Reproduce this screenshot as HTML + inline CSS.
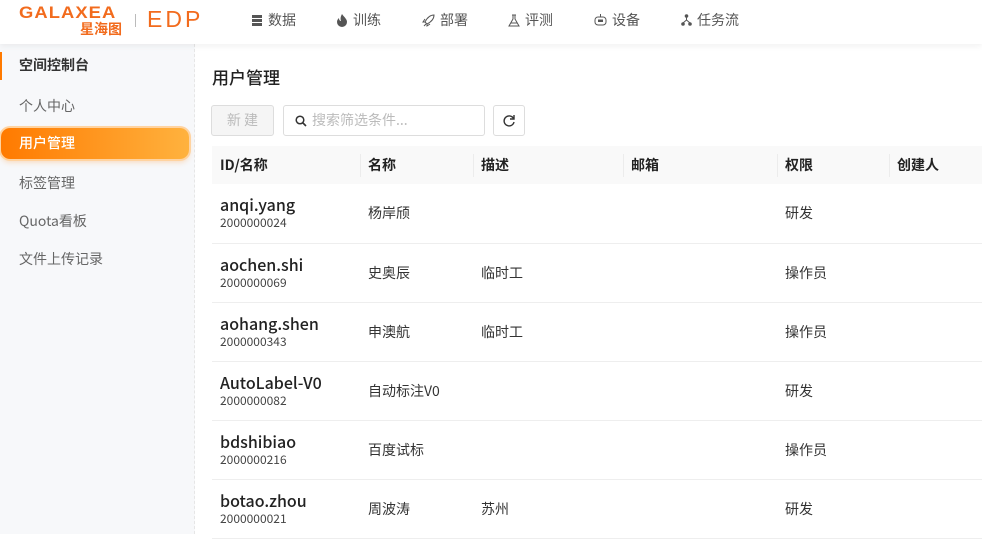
<!DOCTYPE html>
<html><head><meta charset="utf-8"><style>
*{box-sizing:border-box;margin:0;padding:0}
body{width:982px;height:534px;overflow:hidden;background:#fff;font-family:"Noto Sans CJK SC","Liberation Sans",sans-serif;color:#222;position:relative}
.top{position:absolute;left:0;top:0;width:982px;height:44px;background:#fff;box-shadow:0 2px 6px rgba(0,0,0,.06);z-index:2}
.logo{position:absolute;left:19px;top:5px;color:#f26b1d}
.nav{position:absolute;top:10px;font-size:14px;color:#555;display:flex;align-items:center;gap:5px}
.side{position:absolute;left:0;top:44px;width:195px;height:490px;background:#f7f8fa;border-right:1px dashed #e6e6e6}
.si{position:absolute;left:19px;font-size:14px;color:#666}
.act{position:absolute;left:1px;top:84px;width:188px;height:31px;border-radius:9px;background:linear-gradient(90deg,#ff7a00,#ffb23e);box-shadow:0 0 0 2px #ffd3a0,0 3px 6px rgba(255,140,30,.3);color:#fff;font-size:14px;padding:5px 18px;font-weight:500}
.btn{position:absolute;border:1px solid #ddd;border-radius:3px;background:#fff}
table{position:absolute;left:212px;top:146px;border-collapse:collapse;width:770px}
th{height:38px;background:#f9f9f9;text-align:left;font-size:14px;font-weight:700;padding:0 8px;position:relative}
th+th:before{content:"";position:absolute;left:0;top:8px;height:23px;border-left:1px solid #ececec}
td{height:59px;border-bottom:1px solid #eee;font-size:14px;padding:0 8px;color:#333}
.n{font-size:16px;font-weight:500;color:#222;line-height:20px}
.i{font-size:12px;color:#444;line-height:18px}
</style></head><body>
<div class="top">
 <div class="logo">
  <div style="font-size:17px;font-weight:900;line-height:16px;font-family:'Liberation Sans',sans-serif;transform:scaleX(1.08);transform-origin:left;letter-spacing:1px">GALAXEA</div>
  <div style="font-size:14px;font-weight:700;line-height:16px;margin-left:61px">星海图</div>
 </div>
 <div style="position:absolute;left:135px;top:14px;width:1px;height:13px;background:#bbb"></div>
 <div style="position:absolute;left:147px;top:6px;color:#f26b1d;font-size:23px;letter-spacing:3px;font-family:'Liberation Sans',sans-serif;font-weight:400">EDP</div>
 <div class="nav" style="left:252px"><svg width="11" height="11"><rect x="0" y="0" width="10" height="3" fill="#555"/><rect x="0" y="4" width="10" height="3" fill="#555"/><rect x="0" y="8" width="10" height="3" fill="#555"/></svg>数据</div>
 <div class="nav" style="left:337px"><svg width="11" height="13"><path d="M5 0C7 3 10 5 10 8a5 5 0 0 1-10 0c0-2 1-3 2-4 0 2 1 3 2 3C3 4 4 2 5 0z" fill="#555"/></svg>训练</div>
 <div class="nav" style="left:422px"><svg width="13" height="13"><path d="M12 1C8 1 5 4 3 8l2 2c4-2 7-5 7-9zM3 8l-2 0 2-3M5 10v2l3-2M2 12l2-2" stroke="#555" fill="none"/></svg>部署</div>
 <div class="nav" style="left:508px"><svg width="12" height="13"><path d="M4 1h4M5 1v4L1 12h10L7 5V1M3 9h6" stroke="#555" fill="none"/></svg>评测</div>
 <div class="nav" style="left:594px"><svg width="13" height="12"><rect x="1" y="3" width="11" height="8" rx="3" stroke="#555" fill="none"/><rect x="4" y="5.5" width="5" height="2.5" fill="#555"/><path d="M6.5 0v3" stroke="#555"/></svg>设备</div>
 <div class="nav" style="left:681px"><svg width="11" height="12"><circle cx="5.5" cy="2" r="1.8" fill="#555"/><circle cx="2" cy="10" r="1.8" fill="#555"/><circle cx="9" cy="10" r="1.8" fill="#555"/><path d="M5.5 3v3L2 9M5.5 6L9 9" stroke="#555" fill="none"/></svg>任务流</div>
</div>
<div class="side">
 <div style="position:absolute;left:0;top:8px;width:2px;height:28px;background:#ff7a00"></div>
 <div class="si" style="top:11px;color:#333;font-weight:700">空间控制台</div>
 <div class="si" style="top:52px">个人中心</div>
 <div class="act">用户管理</div>
 <div class="si" style="top:129px">标签管理</div>
 <div class="si" style="top:167px">Quota看板</div>
 <div class="si" style="top:205px">文件上传记录</div>
</div>
<div style="position:absolute;left:212px;top:64px;font-size:17px;font-weight:500;color:#222">用户管理</div>
<div class="btn" style="left:211px;top:105px;width:63px;height:31px;background:#f5f5f5;color:#bbb;font-size:14px;text-align:center;line-height:29px">新 建</div>
<div class="btn" style="left:283px;top:105px;width:202px;height:31px;color:#bbb;font-size:14px;line-height:29px;padding-left:28px">搜索筛选条件...
 <svg style="position:absolute;left:11px;top:9px" width="12" height="12"><circle cx="5" cy="5" r="3.8" stroke="#333" stroke-width="1.5" fill="none"/><path d="M8 8l3 3" stroke="#333" stroke-width="1.6"/></svg></div>
<div class="btn" style="left:493px;top:105px;width:32px;height:31px"><svg style="position:absolute;left:8px;top:8px" width="14" height="14"><path d="M11.5 4.5A5 5 0 1 0 12 8" stroke="#333" stroke-width="1.4" fill="none"/><path d="M12 1v4H8" stroke="#333" stroke-width="1.4" fill="none"/></svg></div>
<table>
<tr><th style="width:148px">ID/名称</th><th style="width:113px">名称</th><th style="width:150px">描述</th><th style="width:154px">邮箱</th><th style="width:112px">权限</th><th>创建人</th></tr>
<tr><td><div class="n">anqi.yang</div><div class="i">2000000024</div></td><td>杨岸颀</td><td></td><td></td><td>研发</td><td></td></tr>
<tr><td><div class="n">aochen.shi</div><div class="i">2000000069</div></td><td>史奥辰</td><td>临时工</td><td></td><td>操作员</td><td></td></tr>
<tr><td><div class="n">aohang.shen</div><div class="i">2000000343</div></td><td>申澳航</td><td>临时工</td><td></td><td>操作员</td><td></td></tr>
<tr><td><div class="n">AutoLabel-V0</div><div class="i">2000000082</div></td><td>自动标注V0</td><td></td><td></td><td>研发</td><td></td></tr>
<tr><td><div class="n">bdshibiao</div><div class="i">2000000216</div></td><td>百度试标</td><td></td><td></td><td>操作员</td><td></td></tr>
<tr><td><div class="n">botao.zhou</div><div class="i">2000000021</div></td><td>周波涛</td><td>苏州</td><td></td><td>研发</td><td></td></tr>
</table>
</body></html>
